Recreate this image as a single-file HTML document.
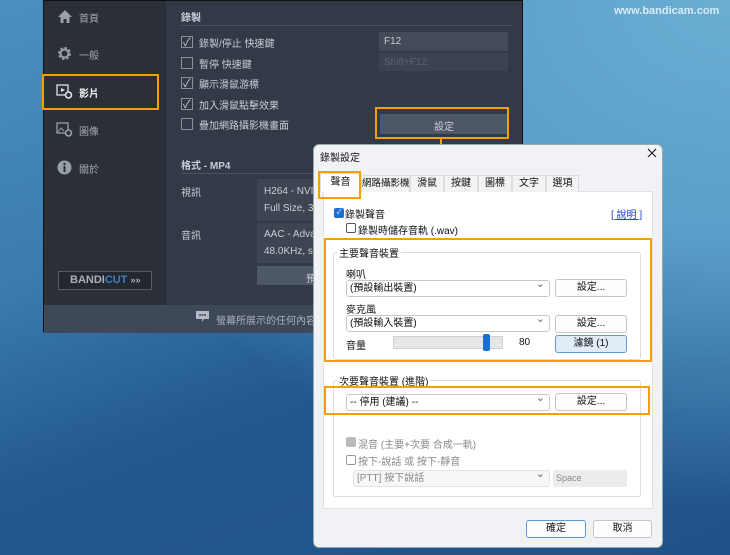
<!DOCTYPE html>
<html><head><meta charset="utf-8"><style>
*{margin:0;padding:0;box-sizing:border-box}
body{width:730px;height:555px;overflow:hidden;position:relative;font-family:"Liberation Sans","Noto Sans CJK TC",sans-serif;font-size:10px;background:linear-gradient(160deg,#4a8fbe 0%,#3b7cb0 35%,#23598f 60%,#1f5289 100%)}
.a{position:absolute}
.bg2{left:0;top:0;width:730px;height:555px;background:radial-gradient(ellipse at 100% 0%,#6aaed3 0%,#5a9fc9 30%,rgba(60,120,175,0) 65%)}
.win{left:43px;top:0;width:480px;height:332px;background:#323a47;border:1px solid #111}
.side{left:0;top:0;width:122px;height:304px;background:#2a2f38}
.bot{left:0;top:304px;width:480px;height:28px;background:#3e4859}
.t{color:#c9ced6;white-space:nowrap}
.cb{width:12px;height:12px;border:1px solid #8a909a;position:absolute}
.fld{background:#434b59;position:absolute}
.ob{position:absolute;border:2px solid #f5a000}
.dlg{left:313px;top:144px;width:350px;height:404px;background:#f0f2f5;border:1px solid #9aa;border-radius:6px}
.d{color:#111;white-space:nowrap;position:absolute}
.sel{position:absolute;background:#fff;border:1px solid #c8c8c8;border-radius:3px;height:17px;padding-left:3px;line-height:15px;color:#111;white-space:nowrap}
.sel:after{content:"⌄";position:absolute;right:4px;top:-4px;color:#666;font-size:11px}
.btn{position:absolute;background:#fdfdfd;border:1px solid #c5c5c5;border-radius:3px;text-align:center;line-height:15px;color:#111;height:18px;white-space:nowrap}
.tab{position:absolute;top:175px;height:17px;background:#f3f3f3;border:1px solid #ddd;border-bottom:none;text-align:center;line-height:15px;color:#111;white-space:nowrap;overflow:hidden}
.grp{position:absolute;border:1px solid #dcdcdc;border-radius:3px}
.gl{position:absolute;background:#fff;padding:0 2px;color:#111;white-space:nowrap}
</style></head><body>
<div class="a bg2"></div>
<div class="a t" style="left:614px;top:5px;color:#d8ebf6;font-size:11px;font-weight:bold">www.bandicam.com</div>
<div class="a win">
 <div class="a side"></div>
 <div class="a bot"></div>
 <svg class="a" style="left:13px;top:8px" width="16" height="15"><path d="M8 1 L15 8 H12.5 V14 H9.5 V10 H6.5 V14 H3.5 V8 H1 Z" fill="#9aa0a8"/></svg>
 <div class="a t" style="left:35px;top:9px;color:#a5abb3">首頁</div>
 <svg class="a" style="left:13px;top:45px" width="15" height="15"><circle cx="7.5" cy="7.5" r="5" fill="none" stroke="#9aa0a8" stroke-width="3" stroke-dasharray="2.2 1.7"/><circle cx="7.5" cy="7.5" r="4" fill="none" stroke="#9aa0a8" stroke-width="2"/></svg>
 <div class="a t" style="left:35px;top:46px;color:#a5abb3">一般</div>
 <svg class="a" style="left:12px;top:83px" width="17" height="15"><rect x="1" y="1" width="11" height="10" fill="none" stroke="#e0e3e7" stroke-width="1.3"/><path d="M5 4 L9 6 L5 8Z" fill="#e0e3e7"/><circle cx="12.5" cy="11" r="3" fill="#2a2f38" stroke="#e0e3e7" stroke-width="1.6"/></svg>
 <div class="a t" style="left:35px;top:84px;color:#eef0f3;font-weight:bold">影片</div>
 <svg class="a" style="left:12px;top:121px" width="17" height="15"><rect x="1" y="1" width="11" height="10" fill="none" stroke="#9aa0a8" stroke-width="1.3"/><path d="M2 10 L5 6 L8 9" stroke="#9aa0a8" fill="none"/><circle cx="12.5" cy="11" r="3" fill="#2a2f38" stroke="#9aa0a8" stroke-width="1.6"/></svg>
 <div class="a t" style="left:35px;top:122px;color:#a5abb3">圖像</div>
 <svg class="a" style="left:13px;top:159px" width="15" height="15"><circle cx="7.5" cy="7.5" r="7" fill="#9aa0a8"/><rect x="6.5" y="6" width="2" height="6" fill="#2a2f38"/><circle cx="7.5" cy="4" r="1.2" fill="#2a2f38"/></svg>
 <div class="a t" style="left:35px;top:160px;color:#a5abb3">關於</div>
 <div class="a" style="left:14px;top:270px;width:94px;height:19px;border:1px solid #555c66;background:#23272e;color:#aab0b8;font-weight:bold;font-size:11px;line-height:17px;padding-left:11px;white-space:nowrap">BANDI<span style="color:#3b7fc8">CUT</span> <span style="font-size:9px">»»</span></div>
 <div class="a t" style="left:137px;top:8px;font-weight:bold">錄製</div>
 <div class="a" style="left:137px;top:24px;width:330px;height:1px;background:#4a525f"></div>
 <div class="cb" style="left:137px;top:35px"></div><div class="a t" style="left:155px;top:34px">錄製/停止 快速鍵</div>
 <div class="cb" style="left:137px;top:56px"></div><div class="a t" style="left:155px;top:55px">暫停 快速鍵</div>
 <div class="cb" style="left:137px;top:76px"></div><div class="a t" style="left:155px;top:75px">顯示滑鼠游標</div>
 <div class="cb" style="left:137px;top:97px"></div><div class="a t" style="left:155px;top:96px">加入滑鼠點擊效果</div>
 <div class="cb" style="left:137px;top:117px"></div><div class="a t" style="left:155px;top:116px">疊加網路攝影機畫面</div>
 <div class="a t" style="left:139px;top:33px;font-size:11px">✓</div>
 <div class="a t" style="left:139px;top:74px;font-size:11px">✓</div>
 <div class="a t" style="left:139px;top:95px;font-size:11px">✓</div>
 <div class="fld" style="left:335px;top:31px;width:129px;height:19px"></div><div class="a t" style="left:340px;top:35px">F12</div>
 <div class="fld" style="left:335px;top:52px;width:129px;height:18px;background:#3c4350"></div><div class="a t" style="left:340px;top:56px;color:#5b6270">Shift+F12</div>
 <div class="fld" style="left:336px;top:113px;width:128px;height:20px;background:#4e5767"></div><div class="a t" style="left:390px;top:117px">設定</div>
 <div class="a t" style="left:137px;top:156px;font-weight:bold">格式 - MP4</div>
 <div class="a" style="left:137px;top:172px;width:330px;height:1px;background:#4a525f"></div>
 <div class="a t" style="left:137px;top:183px">視訊</div>
 <div class="a t" style="left:137px;top:226px">音訊</div>
 <div class="fld" style="left:213px;top:178px;width:260px;height:42px;background:#3d4553"></div>
 <div class="a t" style="left:220px;top:185px">H264 - NVIDIA</div><div class="a t" style="left:220px;top:202px">Full Size, 30fps</div>
 <div class="fld" style="left:213px;top:222px;width:260px;height:40px;background:#3d4553"></div>
 <div class="a t" style="left:220px;top:228px">AAC - Advanced</div><div class="a t" style="left:220px;top:245px">48.0KHz, stereo</div>
 <div class="fld" style="left:213px;top:265px;width:260px;height:19px;background:#4e5767"></div><div class="a t" style="left:262px;top:269px">預</div>
 <svg class="a" style="left:152px;top:310px" width="13" height="12"><path d="M0 0H13V8H8L6 11V8H0Z" fill="#b5bac2"/><circle cx="4" cy="4" r="1" fill="#3e4859"/><circle cx="6.5" cy="4" r="1" fill="#3e4859"/><circle cx="9" cy="4" r="1" fill="#3e4859"/></svg>
 <div class="a t" style="left:172px;top:311px;color:#aab0b8">螢幕所展示的任何內容都</div>
</div>
<div class="ob" style="left:42px;top:74px;width:117px;height:36px"></div>
<div class="ob" style="left:375px;top:107px;width:134px;height:32px"></div>
<div class="a" style="left:440px;top:139px;width:2px;height:24px;background:#f5a000"></div>
<svg class="a" style="left:435px;top:160px" width="12" height="10"><path d="M0 0H12L6 10Z" fill="#f5a000"/></svg>

<div class="a dlg"></div>
<div class="d" style="left:320px;top:149px">錄製設定</div>
<svg class="a" style="left:647px;top:148px" width="10" height="10"><path d="M1 1L9 9M9 1L1 9" stroke="#222" stroke-width="1.2"/></svg>
<div class="a" style="left:323px;top:191px;width:330px;height:318px;background:#fff;border:1px solid #e2e2e2"></div>
<div class="tab" style="left:320px;width:41px;top:173px;height:19px;background:#fff;border-color:#ddd;line-height:17px">聲音</div>
<div class="tab" style="left:361px;width:49px;font-size:9.5px">網路攝影機</div>
<div class="tab" style="left:410px;width:34px">滑鼠</div>
<div class="tab" style="left:444px;width:34px">按鍵</div>
<div class="tab" style="left:478px;width:34px">圖標</div>
<div class="tab" style="left:512px;width:34px">文字</div>
<div class="tab" style="left:546px;width:33px">選項</div>
<div class="ob" style="left:318px;top:171px;width:43px;height:28px"></div>
<div class="a" style="left:334px;top:208px;width:10px;height:10px;background:#1a6fd1;border-radius:2px;color:#fff;font-size:7px;text-align:center;line-height:10px">✓</div>
<div class="d" style="left:345px;top:206px">錄製聲音</div>
<div class="d" style="left:611px;top:206px;color:#1f3fd6;text-decoration:underline">[ 說明 ]</div>
<div class="a" style="left:346px;top:223px;width:10px;height:10px;border:1px solid #555;border-radius:2px"></div>
<div class="d" style="left:358px;top:222px">錄製時儲存音軌 (.wav)</div>
<div class="grp" style="left:333px;top:252px;width:308px;height:108px"></div>
<div class="gl" style="left:337px;top:245px">主要聲音裝置</div>
<div class="d" style="left:346px;top:266px">喇叭</div>
<div class="sel" style="left:346px;top:280px;width:204px">(預設輸出裝置)</div>
<div class="btn" style="left:555px;top:279px;width:72px">設定...</div>
<div class="d" style="left:346px;top:301px">麥克風</div>
<div class="sel" style="left:346px;top:315px;width:204px">(預設輸入裝置)</div>
<div class="btn" style="left:555px;top:315px;width:72px">設定...</div>
<div class="d" style="left:346px;top:337px">音量</div>
<div class="a" style="left:393px;top:336px;width:110px;height:13px;background:#e6e6e6;border:1px solid #d0d0d0"></div>
<div class="a" style="left:483px;top:334px;width:7px;height:17px;background:#1a6fd1;border-radius:2px"></div>
<div class="d" style="left:519px;top:337px">80</div>
<div class="btn" style="left:555px;top:335px;width:72px;background:#e1ecf7;border-color:#5b9bd5">濾鏡 (1)</div>
<div class="ob" style="left:324px;top:238px;width:328px;height:124px"></div>
<div class="grp" style="left:333px;top:380px;width:308px;height:117px"></div>
<div class="gl" style="left:337px;top:373px">次要聲音裝置 (進階)</div>
<div class="sel" style="left:346px;top:394px;width:204px">-- 停用 (建議) --</div>
<div class="btn" style="left:555px;top:393px;width:72px">設定...</div>
<div class="ob" style="left:324px;top:386px;width:326px;height:29px"></div>
<div class="a" style="left:346px;top:437px;width:10px;height:10px;background:#bbb;border-radius:2px"></div>
<div class="d" style="left:358px;top:436px;color:#888">混音 (主要+次要 合成一軌)</div>
<div class="a" style="left:346px;top:455px;width:10px;height:10px;border:1px solid #999;border-radius:2px"></div>
<div class="d" style="left:358px;top:453px;color:#888">按下-說話 或 按下-靜音</div>
<div class="sel" style="left:353px;top:470px;width:197px;background:#f7f7f7;border-color:#e3e3e3;color:#888">[PTT] 按下說話</div>
<div class="a" style="left:553px;top:470px;width:74px;height:17px;background:#ececec;color:#888;padding-left:3px;line-height:16px;font-size:9px">Space</div>
<div class="btn" style="left:526px;top:520px;width:60px;border-color:#5b9bd5">確定</div>
<div class="btn" style="left:593px;top:520px;width:59px">取消</div>
</body></html>
